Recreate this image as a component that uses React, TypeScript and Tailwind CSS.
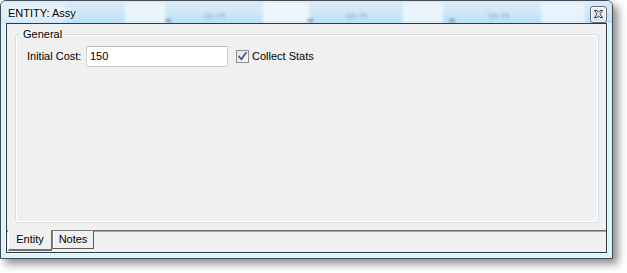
import React from "react";

const font = { fontFamily: '"Liberation Sans", Arial, sans-serif' };

const GlassBackdrop = () => (
    <svg className="absolute inset-0 h-full w-full" viewBox="0 0 611 22" preserveAspectRatio="none">
        <defs>
            <linearGradient id="glass" x1="0" y1="0" x2="0" y2="1">
                <stop offset="0" stopColor="#dceaf4" />
                <stop offset="0.5" stopColor="#d1e8f8" />
                <stop offset="1" stopColor="#b9e0fb" />
            </linearGradient>
            <filter id="soft" x="-20%" y="-50%" width="140%" height="200%">
                <feGaussianBlur stdDeviation="1.6" />
            </filter>
        </defs>
        <rect width="611" height="22" fill="url(#glass)" />
        <g filter="url(#soft)">
            <rect x="-6" y="2" width="70" height="20" fill="#eaf4fb" opacity="0.6" />
            <rect x="124" y="2" width="40" height="20" fill="#eef6fc" opacity="0.9" />
            <rect x="262" y="2" width="46" height="20" fill="#f2f8fd" opacity="0.9" />
            <rect x="402" y="2" width="40" height="20" fill="#eef6fc" opacity="0.9" />
            <rect x="540" y="2" width="44" height="20" fill="#eef6fc" opacity="0.8" />
            <rect x="164" y="18" width="6" height="3" fill="#556677" opacity="0.6" />
            <rect x="306" y="18" width="6" height="3" fill="#556677" opacity="0.6" />
            <rect x="448" y="18" width="6" height="3" fill="#556677" opacity="0.6" />
            <text x="203" y="17" fontSize="8" fill="#8aa2b8" fontFamily="Liberation Sans">Qs 05</text>
            <text x="345" y="17" fontSize="8" fill="#8aa2b8" fontFamily="Liberation Sans">Qs 05</text>
            <text x="487" y="17" fontSize="8" fill="#8aa2b8" fontFamily="Liberation Sans">Qs 05</text>
        </g>
    </svg>
);

const CloseButton = () => (
    <button className="relative flex h-[17px] w-[17px] items-center justify-center rounded-[3px] border border-[#5f6b78] bg-gradient-to-b from-[#f2f6fa] to-[#d8e4ee] shadow-[inset_0_0_0_1px_rgba(255,255,255,0.8)]">
        <svg width="9" height="8" viewBox="0 0 9 8">
            <path d="M0.5 0.5h2.5l1.5 1.8 1.5-1.8h2.5l-2.7 3.5 2.7 3.5h-2.5l-1.5-1.8-1.5 1.8h-2.5l2.7-3.5z" fill="#ffffff" stroke="#2c3540" strokeWidth="1" strokeLinejoin="round" />
        </svg>
    </button>
);

const Checkbox = () => (
    <div className="flex h-[13px] w-[13px] shrink-0 items-center justify-center border border-[#8e8f8f] bg-gradient-to-br from-[#e1e3e6] to-[#fbfbfb]">
        <svg width="9" height="9" viewBox="0 0 9 9">
            <path d="M1 4.5 L3.4 7.2 L8 0.8" fill="none" stroke="#4a5f97" strokeWidth="1.8" strokeLinecap="square" />
        </svg>
    </div>
);

export default function App() {
    return (
        <div className="h-[273px] w-[627px] bg-white" style={font}>
            <div className="flex h-[259px] w-[613px] flex-col overflow-hidden rounded-t-[6px] border border-[#414c56] bg-[#dcf4f8] shadow-[5px_5px_9px_rgba(0,0,0,0.45)]">
                <div className="relative flex h-[22px] shrink-0 items-center justify-between pl-[7px] pr-[5px]">
                    <GlassBackdrop />
                    <span className="relative mt-[2px] text-[11px] leading-none text-black [text-shadow:0_0_6px_#ffffff,0_0_3px_#ffffff]">
                        ENTITY: Assy
                    </span>
                    <div className="relative mt-[4px]">
                        <CloseButton />
                    </div>
                </div>
                <div className="mx-[5px] mb-[5px] flex flex-1 flex-col border border-[#2f3a42] bg-[#f0f0f0] shadow-[0_0_0_1px_rgba(255,255,255,0.5)]">
                    <fieldset className="mb-[7px] ml-[8px] mr-[7px] mt-[3px] flex-1 rounded-[3px] border border-[#d5dfe5] pt-[5px] shadow-[inset_0_0_0_1px_#ffffff]">
                        <legend className="ml-[5px] px-[2px] text-[11px] leading-[14px] text-black">General</legend>
                        <div className="flex items-center whitespace-nowrap pl-[11px] text-[11px] text-black">
                            <span className="w-[59px]">Initial Cost:</span>
                            <div className="flex h-[21px] w-[142px] items-center rounded-[2px] border border-[#c9ccd1] border-t-[#b5b9bf] bg-white pl-[3px]">
                                150
                            </div>
                            <div className="ml-[8px] flex items-center gap-[3px]">
                                <Checkbox />
                                <span>Collect Stats</span>
                            </div>
                        </div>
                    </fieldset>
                    <div className="flex h-[22px] shrink-0 items-start text-[11px] leading-none text-black">
                        <div className="w-[1px] self-stretch border-t-2 border-[#8a8a8a]" />
                        <div className="flex h-[21px] w-[44px] items-center justify-center border-b-2 border-l border-r border-b-[#6f6f6f] border-l-white border-r-[#6f6f6f] pb-[1px]">
                            Entity
                        </div>
                        <div className="flex h-[19px] w-[42px] items-center justify-center border border-[#7b7b7b] border-b-[#5a5a5a] border-r-[#5a5a5a] shadow-[inset_1px_0_0_#ffffff]">
                            Notes
                        </div>
                        <div className="h-[2px] flex-1 border-t border-b border-t-[#6d6d6d] border-b-[#a5a5a5]" />
                    </div>
                </div>
            </div>
        </div>
    );
}
